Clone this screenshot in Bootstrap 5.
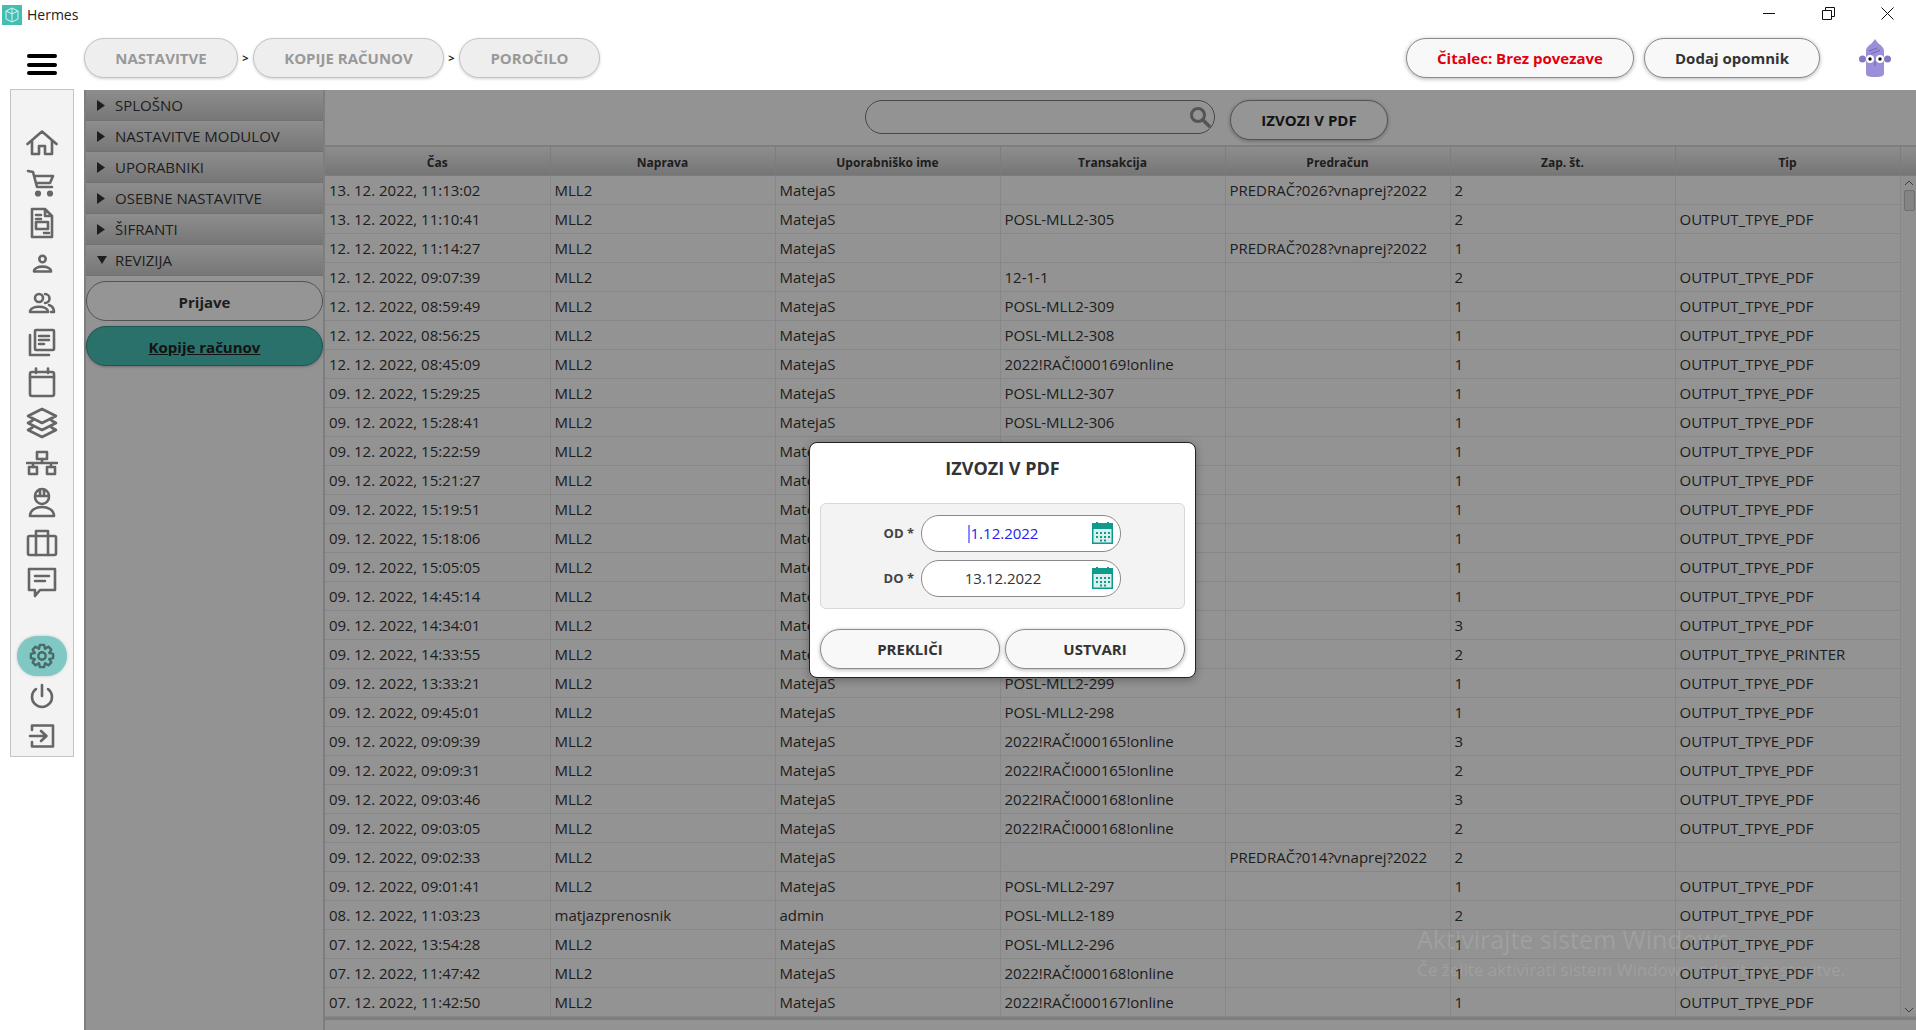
<!DOCTYPE html>
<html lang="sl">
<head>
<meta charset="utf-8">
<title>Hermes</title>
<link href="https://cdn.jsdelivr.net/npm/bootstrap@5.3.0/dist/css/bootstrap.min.css" rel="stylesheet">
<style>
html,body{height:100%;}
body{font-family:"Open Sans","Noto Sans",sans-serif;color:#333;overflow:hidden;background:#fff;}
.title-bar{height:32px;padding:4px 0 0 2px;font-size:14px;color:#222;}
.title-brand{gap:5px;}
.win-ctrls{padding-right:22px;padding-top:3px;gap:46px;}
.top-bar{height:58px;padding:6px 0 12px 84px;}
.burger{left:27px;top:54px;width:30px;}
.burger span{display:block;height:4px;background:#000;border-radius:2px;margin-bottom:4.5px;}
.pill-crumb{height:40px;border:1px solid #c4c4c4;background:#eee;color:#999;font-weight:700;font-size:15px;border-radius:20px;box-shadow:0 1px 3px rgba(0,0,0,.18);padding:0;}
.pill-crumb:disabled{background:#eee;color:#999;border-color:#c4c4c4;opacity:1;}
.crumb-sep{width:15px;text-align:center;font-size:11px;font-weight:700;color:#222;}
.pill-top{height:40px;border:1px solid #8a8a8a;background:#f8f8f8;color:#333;font-weight:700;font-size:15px;border-radius:20px;box-shadow:0 1px 4px rgba(0,0,0,.3);padding:0;}
.pill-red{color:#e2000f;}
.w-a{width:154px}.w-b{width:191px}.w-c{width:141px}.w-d{width:228px;margin-right:10px}.w-e{width:176px;margin-right:39px}
.avatar{margin-right:25px;}
.work{height:940px;}
.rail-wrap{width:84px;padding:0 10px;margin-top:-1px;}
.rail{width:64px;height:668px;background:#f3f3f3;border:1px solid #c4c4c4;padding-top:33px;}
.rail-item{height:40px;}
.rail-gap{height:33px;}
.rail-item svg,.gear-bubble svg{fill:none;stroke:#666;stroke-width:2.6;stroke-linecap:round;stroke-linejoin:round;}
.gear-bubble{width:50px;height:40px;border-radius:20px;background:#80c8c3;box-shadow:0 0 3px rgba(0,0,0,.2);}
.gear-bubble svg{stroke:#4a6b69;}
.main-area{background:#f6f6f6;min-width:0;}
.tree{width:241px;border-left:2px solid #d2d2d2;border-right:2px solid #d2d2d2;}
.tree-head{height:31px;flex:none;background:linear-gradient(#ececec,#c6c6c6);border-bottom:1px solid #bdbdbd;color:#333;font-size:15px;padding-left:11px;gap:10px;}
.tree-head svg{fill:#333;}
.rev-label{margin-left:-2px;}
.tree-btn{height:40px;flex:none;margin:5px 0 0 0;border-radius:20px;border:1px solid #8a8a8a;font-weight:700;font-size:15px;background:#f8f8f8;color:#333;padding:2px 0 0 0;}
.tree-on{background:#46bdb3;color:#222;text-decoration:underline;border-color:#2f8f88;box-shadow:0 1px 3px rgba(0,0,0,.25);}
.data-side{min-width:0;}
.search-row{height:55px;flex:none;padding:10px 0 0 12px;gap:15px;}
.search-field{width:350px;height:34px;border:1px solid #777;border-radius:17px;background:#f6f6f6;}
.search-field svg{right:3px;top:5px;}
.export-btn{width:158px;height:40px;border:1px solid #8a8a8a;border-radius:20px;background:#f8f8f8;color:#222;font-weight:700;font-size:15px;box-shadow:0 1px 4px rgba(0,0,0,.3);padding:0;}
.grid-wrap{border-top:2px solid #d2d2d2;border-bottom:3px solid #d2d2d2;}
.grid-t{table-layout:fixed;width:1591px;margin:0;border-collapse:collapse;--bs-table-bg:transparent;--bs-table-border-color:#e2e2e2;--bs-table-color:#333;}
.grid-t tbody td,.grid-t thead th{padding:0 0 0 4px;height:29px;border:0;border-right:1px solid #e2e2e2;border-bottom:1px solid #e2e2e2;font-size:15px;line-height:28px;white-space:nowrap;overflow:hidden;box-shadow:none;vertical-align:middle;}
.grid-t thead th{height:28px;background:linear-gradient(#ececec,#c4c4c4);font-size:12px;line-height:24px;font-weight:700;text-align:center;border-color:#cfcfcf;padding:4px 0 0 0;}
.grid-t col{width:225px;}
.grid-t col.sb-col{width:16px;}
.grid-t tbody td.sb-cell{padding:0;background:#f1f1f1;border-right:0;vertical-align:top;}
.sb-track{height:840px;padding:4px 1px 3px 3px;}
.sb-thumb{height:21px;width:11px;margin-top:4px;background:#dcdcdc;border:1px solid #bbb;border-radius:2px;}
.sb-track svg{stroke:#666;fill:none;}
.veil{inset:0;background:rgba(0,0,0,.4);padding-left:5px;}
.export-dlg{width:387px;height:236px;border:1px solid #222;border-radius:8px;background:#fff;padding:0 10px;box-shadow:0 2px 8px rgba(0,0,0,.3);}
.dlg-title{height:60px;padding-top:12px;font-size:18px;font-weight:700;color:#333;}
.dlg-fields{height:106px;background:#f3f3f3;border:1px solid #d8d8d8;border-radius:6px;padding:11px 0 0 0;gap:8px;}
.dlg-label{width:100px;padding-right:7px;text-align:right;font-size:13px;font-weight:700;color:#444;}
.date-box{width:200px;height:37px;border:1px solid #8a8a8a;border-radius:18px;background:#fff;font-size:15px;color:#333;padding:0 36px 0 0;}
.date-box svg{right:7px;top:6px;}
.date-blue{color:#2222ee;}
.caret-bar{display:inline-block;width:2px;height:18px;background:#8a8aff;vertical-align:-4px;margin-right:1px;}
.dlg-btns{gap:5px;margin-top:20px;}
.dlg-btn{width:180px;height:40px;border:1px solid #8a8a8a;border-radius:20px;background:#f8f8f8;color:#333;font-weight:700;font-size:15px;box-shadow:0 1px 4px rgba(0,0,0,.3);padding:0;}
.win-mark{right:71px;bottom:48px;color:rgba(255,255,255,.12);pointer-events:none;white-space:nowrap;}
.win-mark-a{font-size:25px;line-height:33px;margin-bottom:2px;}
.win-mark-b{font-size:17px;line-height:24px;margin-top:0;}
</style>
</head>
<body class="position-relative">
<div class="title-bar d-flex align-items-start justify-content-between">
  <div class="title-brand d-flex align-items-center">
    <svg width="20" height="20" viewBox="0 0 20 20"><rect width="20" height="20" fill="#46bdb3"/><path d="M10 3 4 6v8l6 3 6-3V6zM10 3v14M4 6l6 3 6-3" fill="none" stroke="#d8f3f0" stroke-width="1"/></svg>
    <span>Hermes</span>
  </div>
  <div class="win-ctrls d-flex align-items-center">
    <svg width="13" height="13" viewBox="0 0 13 13"><path d="M0 6.500H12" stroke="#111" fill="none"/></svg>
    <svg width="13" height="13" viewBox="0 0 13 13"><path d="M.5 3.500h9v9h-9zM3.500 3V.5h9v9H10" stroke="#111" fill="none"/></svg>
    <svg width="13" height="13" viewBox="0 0 13 13"><path d="M.5.5l12 12M12.500.5l-12 12" stroke="#111" fill="none"/></svg>
  </div>
</div>
<div class="burger position-absolute"><span></span><span></span><span></span></div>
<header class="top-bar d-flex align-items-center">
  <button class="btn pill-crumb w-a" disabled>NASTAVITVE</button>
  <span class="crumb-sep">&gt;</span>
  <button class="btn pill-crumb w-b" disabled>KOPIJE RAČUNOV</button>
  <span class="crumb-sep">&gt;</span>
  <button class="btn pill-crumb w-c" disabled>POROČILO</button>
  <div class="flex-grow-1"></div>
  <button class="btn pill-top pill-red w-d">Čitalec: Brez povezave</button>
  <button class="btn pill-top w-e">Dodaj opomnik</button>
  <svg class="avatar" width="32" height="38" viewBox="0 0 32 38"><path d="M7 12c0-4 4-6 6-8l3-4 3 4c2 2 6 4 6 8v22c0 3-2 4-9 4s-9-1-9-4z" fill="#9a8fd8"/><circle cx="3.500" cy="20" r="3.500" fill="#8379c4"/><circle cx="28.500" cy="20" r="3.500" fill="#8379c4"/><circle cx="11" cy="20" r="4" fill="#fff"/><circle cx="21" cy="20" r="4" fill="#fff"/><circle cx="11" cy="20" r="1.700" fill="#111"/><circle cx="21" cy="20" r="1.700" fill="#111"/><path d="M16 22v5M10 12l8-3M12 15l9-4" stroke="#5c5296" stroke-width=".7" fill="none"/></svg>
</header>
<div class="work d-flex">
  <div class="rail-wrap flex-shrink-0">
    <nav class="rail d-flex flex-column">
      <div class="rail-item d-flex align-items-center justify-content-center"><svg width="32" height="32" viewBox="0 0 32 32"><path d="M1.500 17 16 4.500 30.500 17M6 13.500V27h7v-8h6v8h7V13.500"/></svg></div>
      <div class="rail-item d-flex align-items-center justify-content-center"><svg width="32" height="32" viewBox="0 0 32 32"><path d="M2 4l5 1 4 15h15M8 9h19l-3 7H10"/><circle cx="12" cy="26.500" r="1.800" fill="#666"/><circle cx="24" cy="26.500" r="1.800" fill="#666"/></svg></div>
      <div class="rail-item d-flex align-items-center justify-content-center"><svg width="32" height="32" viewBox="0 0 32 32"><path d="M6 2h13l7 7v21H6zM19 2v7h7M10 8h5M10 12h5M18 26h5"/><rect x="10" y="15" width="12" height="7"/></svg></div>
      <div class="rail-item d-flex align-items-center justify-content-center"><svg width="32" height="32" viewBox="0 0 32 32"><circle cx="16.500" cy="12" r="3.200"/><path d="M8 24.500c0-6.500 17-6.500 17 0z"/></svg></div>
      <div class="rail-item d-flex align-items-center justify-content-center"><svg width="32" height="32" viewBox="0 0 32 32"><circle cx="13" cy="11" r="4"/><path d="M4 25c0-7 18-7 18 0zM19 7a4.500 4.500 0 0 1 0 9M23 18c3 1 5 3 5 7h-3"/></svg></div>
      <div class="rail-item d-flex align-items-center justify-content-center"><svg width="32" height="32" viewBox="0 0 32 32"><rect x="9" y="3" width="19" height="20" rx="1"/><path d="M13 9h10M13 13h10M13 17h5M4 8v20h19"/></svg></div>
      <div class="rail-item d-flex align-items-center justify-content-center"><svg width="32" height="32" viewBox="0 0 32 32"><rect x="4" y="5" width="24" height="24" rx="2"/><path d="M4 10h24M10 1.500V6M22 1.500V6"/></svg></div>
      <div class="rail-item d-flex align-items-center justify-content-center"><svg width="32" height="32" viewBox="0 0 32 32"><path d="M16 2l14 7-14 7-14-7zM6.500 13.500 2 16l14 7 14-7-4.500-2.500M6.500 20.500 2 23l14 7 14-7-4.500-2.500"/></svg></div>
      <div class="rail-item d-flex align-items-center justify-content-center"><svg width="32" height="32" viewBox="0 0 32 32"><rect x="11" y="5" width="10" height="7"/><path d="M16 12v4M1 16h30M7 16v4M25 16v4"/><rect x="3" y="20" width="8" height="7"/><rect x="21" y="20" width="8" height="7"/></svg></div>
      <div class="rail-item d-flex align-items-center justify-content-center"><svg width="32" height="32" viewBox="0 0 32 32"><path d="M9 9a7 7 0 0 1 14 0zM9 10a7 7 0 0 0 14 0M14 2.500V8M18 2.500V8M4 29c0-6 6-9 12-9s12 3 12 9z"/></svg></div>
      <div class="rail-item d-flex align-items-center justify-content-center"><svg width="32" height="32" viewBox="0 0 32 32"><rect x="2" y="9" width="28" height="19" rx="1.500"/><path d="M10 9V4h12v5M10 9v19M22 9v19"/></svg></div>
      <div class="rail-item d-flex align-items-center justify-content-center"><svg width="32" height="32" viewBox="0 0 32 32"><path d="M3 2h26v21H14l-5 6v-6H3zM9 9h14M9 14h10"/></svg></div>
      <div class="rail-gap"></div>
      <div class="rail-item d-flex align-items-center justify-content-center"><div class="gear-bubble d-flex align-items-center justify-content-center"><svg width="26" height="26" viewBox="-14 -14 28 28"><defs><path id="gtooth" d="M-3.300-8-2.200-12H2.200L3.300-8"/></defs><use href="#gtooth"/><use href="#gtooth" transform="rotate(45)"/><use href="#gtooth" transform="rotate(90)"/><use href="#gtooth" transform="rotate(135)"/><use href="#gtooth" transform="rotate(180)"/><use href="#gtooth" transform="rotate(225)"/><use href="#gtooth" transform="rotate(270)"/><use href="#gtooth" transform="rotate(315)"/><circle r="4"/></svg></div></div>
      <div class="rail-item d-flex align-items-center justify-content-center"><svg width="32" height="32" viewBox="0 0 32 32"><path d="M16 5v11M10 9a10 10 0 1 0 12 0"/></svg></div>
      <div class="rail-item d-flex align-items-center justify-content-center"><svg width="32" height="32" viewBox="0 0 32 32"><path d="M6 10V5.500h21v21H6V22M4 16h16M15 11l5.500 5-5.500 5"/></svg></div>
    </nav>
  </div>
  <main class="main-area flex-grow-1 position-relative d-flex">
    <aside class="tree flex-shrink-0 d-flex flex-column">
      <div class="tree-head d-flex align-items-center"><svg width="8" height="11" viewBox="0 0 8 11"><path d="M0 0l8 5.500L0 11z"/></svg><span>SPLOŠNO</span></div>
      <div class="tree-head d-flex align-items-center"><svg width="8" height="11" viewBox="0 0 8 11"><path d="M0 0l8 5.500L0 11z"/></svg><span>NASTAVITVE MODULOV</span></div>
      <div class="tree-head d-flex align-items-center"><svg width="8" height="11" viewBox="0 0 8 11"><path d="M0 0l8 5.500L0 11z"/></svg><span>UPORABNIKI</span></div>
      <div class="tree-head d-flex align-items-center"><svg width="8" height="11" viewBox="0 0 8 11"><path d="M0 0l8 5.500L0 11z"/></svg><span>OSEBNE NASTAVITVE</span></div>
      <div class="tree-head d-flex align-items-center"><svg width="8" height="11" viewBox="0 0 8 11"><path d="M0 0l8 5.500L0 11z"/></svg><span>ŠIFRANTI</span></div>
      <div class="tree-head d-flex align-items-center"><svg width="10" height="8" viewBox="0 0 10 8"><path d="M0 0h10L5 8z"/></svg><span class="rev-label">REVIZIJA</span></div>
      <button class="btn tree-btn">Prijave</button>
      <button class="btn tree-btn tree-on">Kopije računov</button>
    </aside>
    <section class="data-side flex-grow-1 d-flex flex-column">
      <div class="search-row d-flex justify-content-center align-items-start">
        <div class="search-field position-relative"><svg class="position-absolute" width="22" height="22" viewBox="0 0 22 22"><circle cx="9" cy="9" r="6.500" fill="none" stroke="#8c8c8c" stroke-width="3"/><path d="M14 14l6 6" stroke="#8c8c8c" stroke-width="3.500" stroke-linecap="round"/></svg></div>
        <button class="btn export-btn">IZVOZI V PDF</button>
      </div>
      <div class="grid-wrap">
        <table class="table grid-t">
          <colgroup><col><col><col><col><col><col><col><col class="sb-col"></colgroup>
          <thead><tr><th>Čas</th><th>Naprava</th><th>Uporabniško ime</th><th>Transakcija</th><th>Predračun</th><th>Zap. št.</th><th>Tip</th><th></th></tr></thead>
          <tbody>
<tr><td>13. 12. 2022, 11:13:02</td><td>MLL2</td><td>MatejaS</td><td></td><td>PREDRAČ?026?vnaprej?2022</td><td>2</td><td></td><td class="sb-cell" rowspan="29"><div class="sb-track d-flex flex-column align-items-center"><svg width="10" height="6" viewBox="0 0 10 6"><path d="M1 5l4-4 4 4"/></svg><div class="sb-thumb"></div><div class="flex-grow-1"></div><svg width="10" height="6" viewBox="0 0 10 6"><path d="M1 1l4 4 4-4"/></svg></div></td></tr>
<tr><td>13. 12. 2022, 11:10:41</td><td>MLL2</td><td>MatejaS</td><td>POSL-MLL2-305</td><td></td><td>2</td><td>OUTPUT_TPYE_PDF</td></tr>
<tr><td>12. 12. 2022, 11:14:27</td><td>MLL2</td><td>MatejaS</td><td></td><td>PREDRAČ?028?vnaprej?2022</td><td>1</td><td></td></tr>
<tr><td>12. 12. 2022, 09:07:39</td><td>MLL2</td><td>MatejaS</td><td>12-1-1</td><td></td><td>2</td><td>OUTPUT_TPYE_PDF</td></tr>
<tr><td>12. 12. 2022, 08:59:49</td><td>MLL2</td><td>MatejaS</td><td>POSL-MLL2-309</td><td></td><td>1</td><td>OUTPUT_TPYE_PDF</td></tr>
<tr><td>12. 12. 2022, 08:56:25</td><td>MLL2</td><td>MatejaS</td><td>POSL-MLL2-308</td><td></td><td>1</td><td>OUTPUT_TPYE_PDF</td></tr>
<tr><td>12. 12. 2022, 08:45:09</td><td>MLL2</td><td>MatejaS</td><td>2022!RAČ!000169!online</td><td></td><td>1</td><td>OUTPUT_TPYE_PDF</td></tr>
<tr><td>09. 12. 2022, 15:29:25</td><td>MLL2</td><td>MatejaS</td><td>POSL-MLL2-307</td><td></td><td>1</td><td>OUTPUT_TPYE_PDF</td></tr>
<tr><td>09. 12. 2022, 15:28:41</td><td>MLL2</td><td>MatejaS</td><td>POSL-MLL2-306</td><td></td><td>1</td><td>OUTPUT_TPYE_PDF</td></tr>
<tr><td>09. 12. 2022, 15:22:59</td><td>MLL2</td><td>MatejaS</td><td></td><td></td><td>1</td><td>OUTPUT_TPYE_PDF</td></tr>
<tr><td>09. 12. 2022, 15:21:27</td><td>MLL2</td><td>MatejaS</td><td></td><td></td><td>1</td><td>OUTPUT_TPYE_PDF</td></tr>
<tr><td>09. 12. 2022, 15:19:51</td><td>MLL2</td><td>MatejaS</td><td></td><td></td><td>1</td><td>OUTPUT_TPYE_PDF</td></tr>
<tr><td>09. 12. 2022, 15:18:06</td><td>MLL2</td><td>MatejaS</td><td></td><td></td><td>1</td><td>OUTPUT_TPYE_PDF</td></tr>
<tr><td>09. 12. 2022, 15:05:05</td><td>MLL2</td><td>MatejaS</td><td></td><td></td><td>1</td><td>OUTPUT_TPYE_PDF</td></tr>
<tr><td>09. 12. 2022, 14:45:14</td><td>MLL2</td><td>MatejaS</td><td></td><td></td><td>1</td><td>OUTPUT_TPYE_PDF</td></tr>
<tr><td>09. 12. 2022, 14:34:01</td><td>MLL2</td><td>MatejaS</td><td></td><td></td><td>3</td><td>OUTPUT_TPYE_PDF</td></tr>
<tr><td>09. 12. 2022, 14:33:55</td><td>MLL2</td><td>MatejaS</td><td></td><td></td><td>2</td><td>OUTPUT_TPYE_PRINTER</td></tr>
<tr><td>09. 12. 2022, 13:33:21</td><td>MLL2</td><td>MatejaS</td><td>POSL-MLL2-299</td><td></td><td>1</td><td>OUTPUT_TPYE_PDF</td></tr>
<tr><td>09. 12. 2022, 09:45:01</td><td>MLL2</td><td>MatejaS</td><td>POSL-MLL2-298</td><td></td><td>1</td><td>OUTPUT_TPYE_PDF</td></tr>
<tr><td>09. 12. 2022, 09:09:39</td><td>MLL2</td><td>MatejaS</td><td>2022!RAČ!000165!online</td><td></td><td>3</td><td>OUTPUT_TPYE_PDF</td></tr>
<tr><td>09. 12. 2022, 09:09:31</td><td>MLL2</td><td>MatejaS</td><td>2022!RAČ!000165!online</td><td></td><td>2</td><td>OUTPUT_TPYE_PDF</td></tr>
<tr><td>09. 12. 2022, 09:03:46</td><td>MLL2</td><td>MatejaS</td><td>2022!RAČ!000168!online</td><td></td><td>3</td><td>OUTPUT_TPYE_PDF</td></tr>
<tr><td>09. 12. 2022, 09:03:05</td><td>MLL2</td><td>MatejaS</td><td>2022!RAČ!000168!online</td><td></td><td>2</td><td>OUTPUT_TPYE_PDF</td></tr>
<tr><td>09. 12. 2022, 09:02:33</td><td>MLL2</td><td>MatejaS</td><td></td><td>PREDRAČ?014?vnaprej?2022</td><td>2</td><td></td></tr>
<tr><td>09. 12. 2022, 09:01:41</td><td>MLL2</td><td>MatejaS</td><td>POSL-MLL2-297</td><td></td><td>1</td><td>OUTPUT_TPYE_PDF</td></tr>
<tr><td>08. 12. 2022, 11:03:23</td><td>matjazprenosnik</td><td>admin</td><td>POSL-MLL2-189</td><td></td><td>2</td><td>OUTPUT_TPYE_PDF</td></tr>
<tr><td>07. 12. 2022, 13:54:28</td><td>MLL2</td><td>MatejaS</td><td>POSL-MLL2-296</td><td></td><td>1</td><td>OUTPUT_TPYE_PDF</td></tr>
<tr><td>07. 12. 2022, 11:47:42</td><td>MLL2</td><td>MatejaS</td><td>2022!RAČ!000168!online</td><td></td><td>1</td><td>OUTPUT_TPYE_PDF</td></tr>
<tr><td>07. 12. 2022, 11:42:50</td><td>MLL2</td><td>MatejaS</td><td>2022!RAČ!000167!online</td><td></td><td>1</td><td>OUTPUT_TPYE_PDF</td></tr>
          </tbody>
        </table>
      </div>
    </section>
    <div class="veil position-absolute d-flex align-items-center justify-content-center">
      <div class="export-dlg d-flex flex-column">
        <div class="dlg-title text-center">IZVOZI V PDF</div>
        <div class="dlg-fields d-flex flex-column">
          <div class="d-flex align-items-center">
            <div class="dlg-label">OD *</div>
            <div class="date-box position-relative d-flex align-items-center justify-content-center date-blue"><span><span class="caret-bar"></span>1.12.2022</span>
              <svg class="position-absolute" width="21" height="22" viewBox="0 0 21 22"><rect y="1" width="21" height="21" fill="#0f9a8c"/><rect x="1.500" y="7" width="18" height="13.500" fill="#d9f0ee"/><path d="M4 10h2v2H4zM8 10h2v2H8zM12 10h2v2h-2zM16 10h2v2h-2zM4 14h2v2H4zM8 14h2v2H8zM12 14h2v2h-2zM16 14h2v2h-2zM8 17.500h2v2H8zM12 17.500h2v2h-2z" fill="#0f9a8c"/><path d="M4 0h2v2H4zM15 0h2v2h-2z" fill="#0f9a8c"/></svg>
            </div>
          </div>
          <div class="d-flex align-items-center">
            <div class="dlg-label">DO *</div>
            <div class="date-box position-relative d-flex align-items-center justify-content-center"><span>13.12.2022</span>
              <svg class="position-absolute" width="21" height="22" viewBox="0 0 21 22"><rect y="1" width="21" height="21" fill="#0f9a8c"/><rect x="1.500" y="7" width="18" height="13.500" fill="#d9f0ee"/><path d="M4 10h2v2H4zM8 10h2v2H8zM12 10h2v2h-2zM16 10h2v2h-2zM4 14h2v2H4zM8 14h2v2H8zM12 14h2v2h-2zM16 14h2v2h-2zM8 17.500h2v2H8zM12 17.500h2v2h-2z" fill="#0f9a8c"/><path d="M4 0h2v2H4zM15 0h2v2h-2z" fill="#0f9a8c"/></svg>
            </div>
          </div>
        </div>
        <div class="dlg-btns d-flex">
          <button class="btn dlg-btn">PREKLIČI</button>
          <button class="btn dlg-btn">USTVARI</button>
        </div>
      </div>
    </div>
  </main>
</div>
<div class="win-mark position-absolute">
  <div class="win-mark-a">Aktivirajte sistem Windows</div>
  <div class="win-mark-b">Če želite aktivirati sistem Windows, odprite nastavitve.</div>
</div>
<script src="https://cdn.jsdelivr.net/npm/bootstrap@5.3.0/dist/js/bootstrap.bundle.min.js"></script>
</body>
</html>
